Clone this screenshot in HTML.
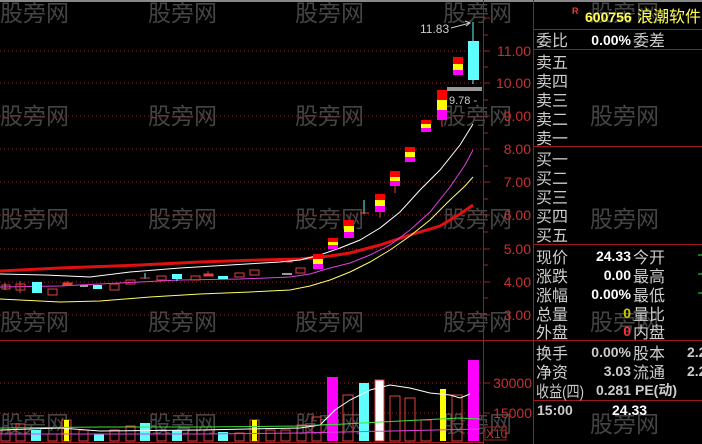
<!DOCTYPE html>
<html><head><meta charset="utf-8"><style>
body{margin:0;background:#000;width:702px;height:444px;overflow:hidden}
svg{display:block}
text{font-family:"Liberation Sans","Noto Sans CJK SC",sans-serif}
.cj{font-family:"Noto Sans CJK SC","WenQuanYi Zen Hei",sans-serif}
</style></head><body>
<svg width="702" height="444" viewBox="0 0 702 444" xmlns="http://www.w3.org/2000/svg">
<rect width="702" height="444" fill="#000"/>
<line x1="0" y1="1" x2="702" y2="1" stroke="#888" stroke-width="2"/>
<g class="cj" font-size="23" fill="#444">
<text x="0" y="21">股旁网</text><text x="148" y="21">股旁网</text><text x="295" y="21">股旁网</text><text x="443" y="21">股旁网</text><text x="590" y="21">股旁网</text>
<text x="0" y="124">股旁网</text><text x="148" y="124">股旁网</text><text x="295" y="124">股旁网</text><text x="443" y="124">股旁网</text><text x="590" y="124">股旁网</text>
<text x="0" y="227">股旁网</text><text x="148" y="227">股旁网</text><text x="295" y="227">股旁网</text><text x="443" y="227">股旁网</text><text x="590" y="227">股旁网</text>
<text x="0" y="330">股旁网</text><text x="148" y="330">股旁网</text><text x="295" y="330">股旁网</text><text x="443" y="330">股旁网</text><text x="590" y="330">股旁网</text>
<text x="0" y="432">股旁网</text><text x="148" y="432">股旁网</text><text x="295" y="432">股旁网</text><text x="443" y="432">股旁网</text><text x="590" y="432">股旁网</text>
</g>
<g stroke="#a02020" stroke-dasharray="1,3" stroke-width="1">
<line x1="0" y1="51" x2="483" y2="51"/><line x1="0" y1="83" x2="483" y2="83"/><line x1="0" y1="116" x2="483" y2="116"/><line x1="0" y1="149" x2="483" y2="149"/><line x1="0" y1="182" x2="483" y2="182"/><line x1="0" y1="215" x2="483" y2="215"/><line x1="0" y1="249" x2="483" y2="249"/><line x1="0" y1="282" x2="483" y2="282"/><line x1="0" y1="315" x2="483" y2="315"/>
<line x1="0" y1="383" x2="483" y2="383"/><line x1="0" y1="413" x2="483" y2="413"/>
</g>
<g stroke="#a01818" stroke-width="1" fill="none">
<line x1="483.5" y1="0" x2="483.5" y2="444"/>
<line x1="533.5" y1="0" x2="533.5" y2="444"/>
<line x1="0" y1="340.5" x2="702" y2="340.5"/>
<line x1="534" y1="29.5" x2="702" y2="29.5"/>
<line x1="534" y1="49.5" x2="702" y2="49.5"/>
<line x1="534" y1="146.5" x2="702" y2="146.5"/>
<line x1="534" y1="244.5" x2="702" y2="244.5"/>
<line x1="534" y1="400.5" x2="702" y2="400.5"/>
<line x1="0" y1="442.5" x2="483" y2="442.5"/>
</g>
<g stroke="#a02020">
<line x1="483" y1="18" x2="490" y2="18"/><line x1="483" y1="35" x2="488" y2="35"/><line x1="483" y1="51" x2="490" y2="51"/><line x1="483" y1="67" x2="488" y2="67"/><line x1="483" y1="83" x2="490" y2="83"/><line x1="483" y1="100" x2="488" y2="100"/><line x1="483" y1="116" x2="490" y2="116"/><line x1="483" y1="133" x2="488" y2="133"/><line x1="483" y1="149" x2="490" y2="149"/><line x1="483" y1="166" x2="488" y2="166"/><line x1="483" y1="182" x2="490" y2="182"/><line x1="483" y1="199" x2="488" y2="199"/><line x1="483" y1="215" x2="490" y2="215"/><line x1="483" y1="232" x2="488" y2="232"/><line x1="483" y1="249" x2="490" y2="249"/><line x1="483" y1="265" x2="488" y2="265"/><line x1="483" y1="282" x2="490" y2="282"/><line x1="483" y1="298" x2="488" y2="298"/><line x1="483" y1="315" x2="490" y2="315"/><line x1="483" y1="383" x2="490" y2="383"/><line x1="483" y1="413" x2="490" y2="413"/>
</g>
<g fill="#c83030" font-size="14" text-anchor="end">
<text x="531" y="56">11.00</text><text x="531" y="88">10.00</text><text x="531" y="121">9.00</text><text x="531" y="154">8.00</text><text x="531" y="187">7.00</text><text x="531" y="220">6.00</text><text x="531" y="254">5.00</text><text x="531" y="287">4.00</text><text x="531" y="320">3.00</text>
<text x="532" y="388">30000</text><text x="532" y="418">15000</text>
</g>
<rect x="485" y="427" width="21" height="13" fill="none" stroke="#a02020"/>
<text x="486" y="438" font-size="12" fill="#c83030">X10</text>
<polyline fill="none" stroke="#e01010" stroke-width="3" points="0,271 60,268 140,265 200,262 260,260 300,259 330,256 350,253 380,245 410,235 440,226 460,214 473,205"/>
<polyline fill="none" stroke="#fff" stroke-width="1" points="0,274 45,275 90,277 130,272 180,268 230,265 280,262 300,260 320,255 340,248 360,240 380,228 400,212 420,190 440,170 460,145 473,124"/>
<polyline fill="none" stroke="#e040e0" stroke-width="1" points="0,287 60,286 120,283 180,280 240,279 290,277 310,274 330,268 350,263 370,255 390,245 410,230 430,212 450,187 465,165 473,150"/>
<polyline fill="none" stroke="#ffff60" stroke-width="1" points="0,299 60,302 100,301 150,297 200,294 250,292 290,290 310,286 330,280 350,272 370,262 390,250 410,236 430,220 450,200 465,186 473,177"/>
<g fill="none" stroke="#e04040">
<rect x="2" y="285" width="8" height="4"/><rect x="16" y="284" width="9" height="6"/><line x1="20" y1="281" x2="20" y2="293"/>
<rect x="48" y="289" width="9" height="6"/><line x1="67" y1="281" x2="67" y2="286"/><line x1="63" y1="284" x2="72" y2="284"/>
<rect x="110" y="284" width="9" height="6"/><rect x="126" y="280" width="9" height="4"/><rect x="157" y="276" width="9" height="4"/><rect x="191" y="276" width="9" height="4"/>
<rect x="235" y="273" width="9" height="4"/><rect x="250" y="270" width="9" height="5"/><rect x="296" y="268" width="9" height="5"/>
</g>
<g fill="#e04040" stroke="#e04040">
<rect x="63" y="283" width="9" height="2"/><rect x="204" y="274" width="9" height="2"/><line x1="208" y1="271" x2="208" y2="276"/>
</g>
<g fill="#60ffff"><rect x="32" y="282" width="10" height="11"/><rect x="93" y="285" width="9" height="4"/><rect x="172" y="274" width="10" height="5"/><rect x="218" y="276" width="10" height="3"/></g>
<line x1="145" y1="273" x2="145" y2="279" stroke="#60ffff"/><line x1="140" y1="278" x2="150" y2="278" stroke="#e04040"/>
<line x1="177" y1="279" x2="177" y2="281" stroke="#60ffff"/>
<g stroke="#999"><line x1="80" y1="286" x2="88" y2="286" stroke-width="2"/><line x1="282" y1="274" x2="292" y2="274" stroke-width="2"/><line x1="5" y1="283" x2="5" y2="290"/></g>
<line x1="285" y1="262" x2="293" y2="262" stroke="#e04040"/>
<g>
<rect x="313" y="254" width="10" height="5" fill="#f00"/><rect x="313" y="259" width="10" height="5" fill="#ff0"/><rect x="313" y="264" width="10" height="5" fill="#f0f"/>
<rect x="328" y="238" width="10" height="4" fill="#f00"/><rect x="328" y="242" width="10" height="3" fill="#ff0"/><rect x="328" y="245" width="10" height="4" fill="#f0f"/>
<rect x="344" y="220" width="10" height="6" fill="#f00"/><rect x="344" y="226" width="10" height="6" fill="#ff0"/><rect x="344" y="232" width="10" height="6" fill="#f0f"/>
<line x1="364" y1="200" x2="364" y2="214" stroke="#60ffff"/><line x1="360" y1="213" x2="369" y2="213" stroke="#e04040"/>
<rect x="375" y="194" width="10" height="6" fill="#f00"/><rect x="375" y="200" width="10" height="6" fill="#ff0"/><rect x="375" y="206" width="10" height="6" fill="#f0f"/><line x1="380" y1="212" x2="380" y2="218" stroke="#e04040"/>
<rect x="390" y="171" width="10" height="6" fill="#f00"/><rect x="390" y="177" width="10" height="4" fill="#ff0"/><rect x="390" y="181" width="10" height="5" fill="#f0f"/><line x1="395" y1="186" x2="395" y2="193" stroke="#e04040"/>
<rect x="405" y="147" width="10" height="5" fill="#f00"/><rect x="405" y="152" width="10" height="5" fill="#ff0"/><rect x="405" y="157" width="10" height="5" fill="#f0f"/>
<rect x="421" y="120" width="10" height="4" fill="#f00"/><rect x="421" y="124" width="10" height="4" fill="#ff0"/><rect x="421" y="128" width="10" height="4" fill="#f0f"/>
<rect x="437" y="90" width="10" height="10" fill="#f00"/><rect x="437" y="100" width="10" height="10" fill="#ff0"/><rect x="437" y="110" width="10" height="10" fill="#f0f"/><line x1="442" y1="120" x2="442" y2="127" stroke="#e04040"/>
<rect x="453" y="57" width="10" height="7" fill="#f00"/><rect x="453" y="64" width="10" height="6" fill="#ff0"/><rect x="453" y="70" width="10" height="5" fill="#f0f"/>
<line x1="473" y1="22" x2="473" y2="84" stroke="#60ffff"/><rect x="468" y="41" width="11" height="39" fill="#60ffff"/>
</g>
<rect x="447" y="87" width="35" height="4" fill="#999"/>
<text x="449" y="104" font-size="11" fill="#ccc">9.78 -</text>
<text x="420" y="33" font-size="12" fill="#ccc">11.83</text>
<polyline points="451,28 470,23" fill="none" stroke="#ccc"/><polyline points="465,21 470,23 466,26" fill="none" stroke="#ccc"/>
<g fill="none" stroke="#e04040">
<rect x="1" y="430" width="9" height="11"/><rect x="16" y="424" width="9" height="17"/><rect x="48" y="434" width="9" height="7"/><rect x="79" y="430" width="9" height="11"/><rect x="110" y="430" width="9" height="11"/><rect x="126" y="426" width="9" height="15"/><rect x="157" y="430" width="9" height="11"/><rect x="188" y="430" width="9" height="11"/><rect x="204" y="430" width="9" height="11"/><rect x="235" y="433" width="9" height="8"/><rect x="266" y="430" width="9" height="11"/><rect x="281" y="430" width="9" height="11"/><rect x="297" y="425" width="9" height="16"/><rect x="312" y="417" width="9" height="24"/><rect x="343" y="395" width="10" height="46"/><rect x="390" y="396" width="10" height="45"/><rect x="405" y="398" width="10" height="43"/><rect x="421" y="420" width="10" height="21"/><rect x="452" y="395" width="10" height="46"/><rect x="62" y="420" width="9" height="21"/><rect x="250" y="420" width="9" height="21"/>
</g>
<g>
<rect x="31" y="430" width="10" height="11" fill="#60ffff"/><rect x="94" y="434" width="10" height="7" fill="#60ffff"/><rect x="140" y="423" width="10" height="18" fill="#60ffff"/><rect x="172" y="430" width="10" height="11" fill="#60ffff"/><rect x="218" y="432" width="10" height="9" fill="#60ffff"/>
<rect x="64" y="420" width="5" height="21" fill="#ff0"/><rect x="252" y="420" width="5" height="21" fill="#ff0"/>
<rect x="327" y="377" width="11" height="64" fill="#f0f"/><rect x="359" y="383" width="10" height="58" fill="#60ffff"/><rect x="375" y="380" width="9" height="61" fill="#fff" stroke="#e04040"/><rect x="440" y="389" width="6" height="52" fill="#ff0"/><rect x="468" y="360" width="11" height="81" fill="#f0f"/>
</g>
<polyline fill="none" stroke="#fff" points="0,430 60,428 100,431 200,430 300,428 320,425 335,410 350,400 370,390 390,385 410,388 430,393 450,395 460,398 470,394"/>
<polyline fill="none" stroke="#40e040" points="0,428 100,427 200,427 300,426 320,425 345,424 380,422 420,420 460,418 480,419"/>
<polyline fill="none" stroke="#e040e0" points="0,434 200,434 300,433 480,429"/>
<text x="572" y="14" font-size="9" font-weight="bold" fill="#e04040">R</text>
<text x="585" y="22" font-size="14" font-weight="bold" fill="#ff5">600756</text>
<text x="637" y="22" font-size="16" fill="#ff5" class="cj">浪潮软件</text>
<g class="cj" font-size="16" fill="#ccc">
<text x="536" y="46">委比</text><text x="633" y="46">委差</text>
<text x="536" y="68">卖五</text><text x="536" y="87">卖四</text><text x="536" y="106">卖三</text><text x="536" y="125">卖二</text><text x="536" y="144">卖一</text>
<text x="536" y="165">买一</text><text x="536" y="184">买二</text><text x="536" y="203">买三</text><text x="536" y="222">买四</text><text x="536" y="241">买五</text>
<text x="536" y="263">现价</text><text x="633" y="263">今开</text>
<text x="536" y="282">涨跌</text><text x="633" y="282">最高</text>
<text x="536" y="301">涨幅</text><text x="633" y="301">最低</text>
<text x="536" y="320">总量</text><text x="633" y="320">量比</text>
<text x="536" y="338">外盘</text><text x="633" y="338">内盘</text>
<text x="536" y="359">换手</text><text x="633" y="359">股本</text>
<text x="536" y="378">净资</text><text x="633" y="378">流通</text>
<text x="536" y="397" textLength="48" lengthAdjust="spacingAndGlyphs">收益(四)</text>
</g>
<g font-size="14" font-weight="bold" fill="#fff" text-anchor="end">
<text x="631" y="45">0.00%</text>
<text x="631" y="261">24.33</text><text x="631" y="280">0.00</text><text x="631" y="299">0.00%</text>
</g>
<g font-size="14" font-weight="bold" fill="#ccc" text-anchor="end">
<text x="631" y="357">0.00%</text><text x="631" y="376">3.03</text><text x="631" y="395">0.281</text>
</g>
<text x="631" y="318" font-size="14" font-weight="bold" fill="#cc0" text-anchor="end">0</text>
<text x="631" y="336" font-size="14" font-weight="bold" fill="#f33" text-anchor="end">0</text>
<text x="635" y="395" font-size="14" font-weight="bold" fill="#ccc">PE(动)</text>
<text x="687" y="357" font-size="14" font-weight="bold" fill="#ccc">2.2</text><text x="687" y="376" font-size="14" font-weight="bold" fill="#ccc">2.2</text>
<g stroke="#40e040"><line x1="698" y1="255" x2="702" y2="255"/><line x1="698" y1="274" x2="702" y2="274"/><line x1="698" y1="293" x2="702" y2="293"/></g>
<text x="537" y="415" font-size="14" font-weight="bold" fill="#ccc">15:00</text>
<text x="612" y="415" font-size="14" font-weight="bold" fill="#fff">24.33</text>
</svg>
</body></html>
